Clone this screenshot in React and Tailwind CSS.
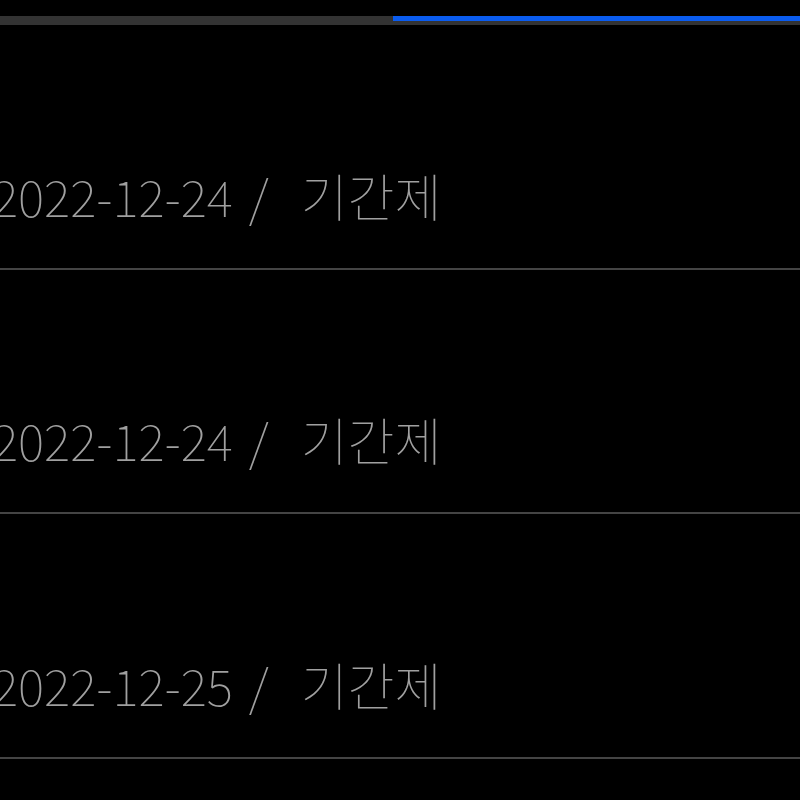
const rows = [
  { date: '2022-12-24', type: '기간제' },
  { date: '2022-12-24', type: '기간제' },
  { date: '2022-12-25', type: '기간제' },
];

export default function App() {
  return (
    <div
      className="w-[800px] h-[800px] overflow-hidden bg-black pt-[16px]"
      style={{ fontFamily: '"Noto Sans CJK KR", "Noto Sans", sans-serif' }}
    >
      <div className="flex h-[9px] bg-[#333333]">
        <div className="w-[393px]" />
        <div className="flex-1 h-[5px] bg-[#0a5cf0]" />
      </div>
      {rows.map((r, i) => (
        <div key={i} className="h-[244.5px] border-b-2 border-[#444444] flex items-end pb-[47px]">
          <div className="ml-[-8px] flex items-baseline whitespace-pre font-thin leading-none text-[#a0a0a0]">
            <span className="text-[50px]">{r.date}</span>
            <span className="text-[50px] ml-[16px]">/</span>
            <span className="text-[51px] ml-[32px]">{r.type}</span>
          </div>
        </div>
      ))}
    </div>
  );
}
